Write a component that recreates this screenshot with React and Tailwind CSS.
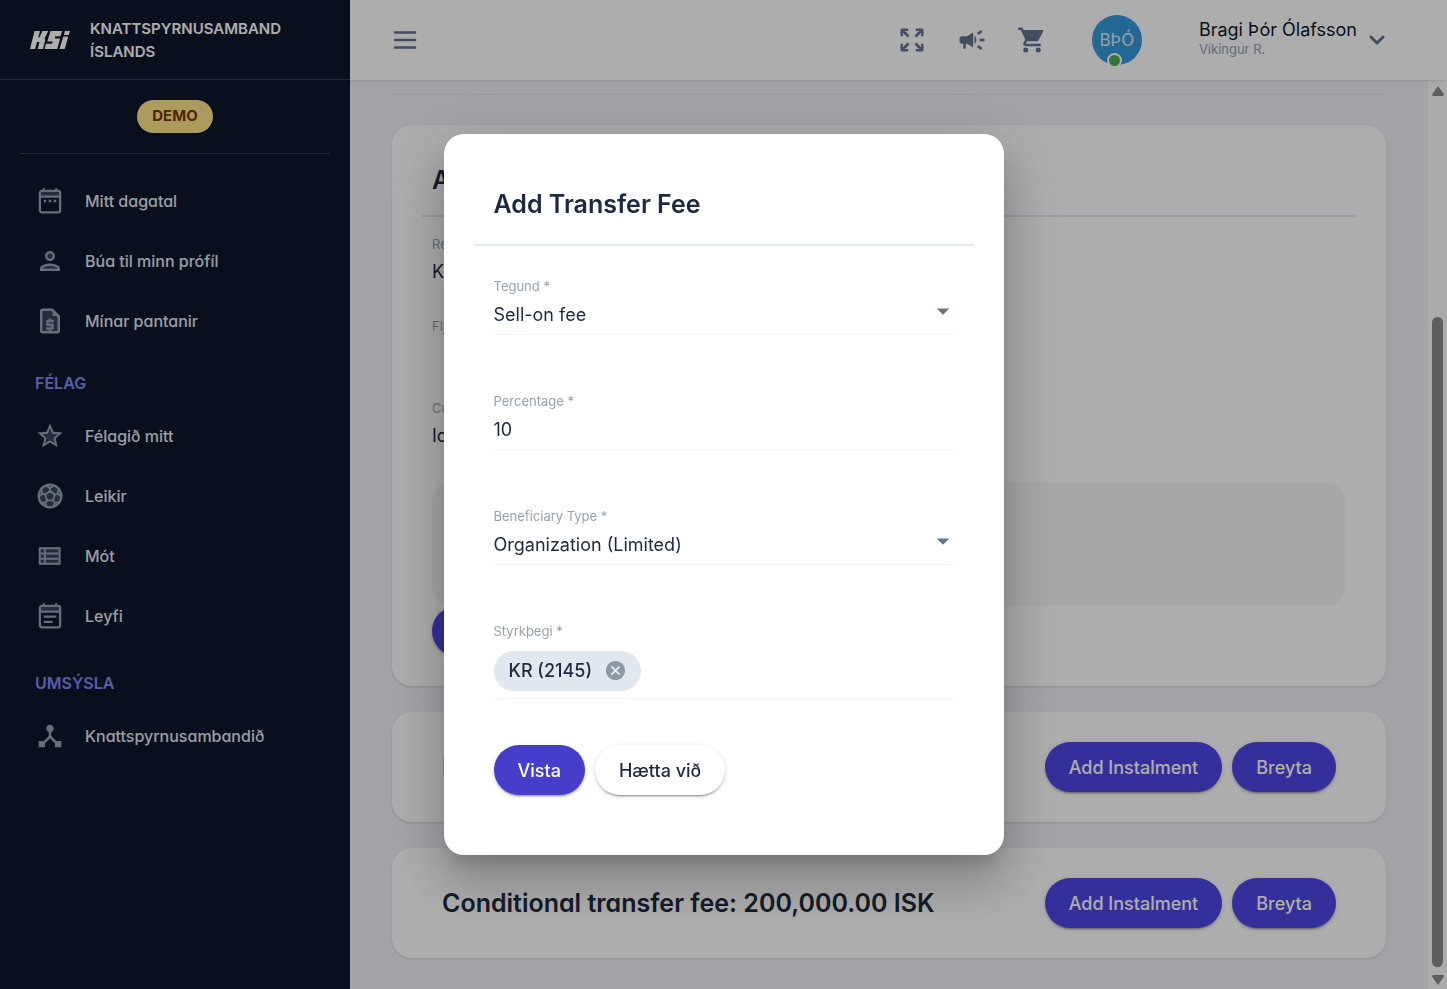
import React from "react";
import { MdCampaign, MdArrowDropDown, MdCancel, MdOutlineDeviceHub, MdAdd } from "react-icons/md";
import { HiOutlineMenu, HiChevronDown } from "react-icons/hi";

const alt = "[font-feature-settings:'cv11']";

function Svg({ children }) {
  return (
    <svg viewBox="0 0 24 24" className="size-[30px]" fill="currentColor" aria-hidden="true">
      {children}
    </svg>
  );
}

function Calendar({ children }) {
  return (
    <Svg>
      <path fillOpacity="0.3" d="M4 4.500h16V8H4z" />
      <g fill="none" stroke="currentColor" strokeWidth="1.8">
        <rect x="3.900" y="3.900" width="16.200" height="17.200" rx="1.500" />
        <path d="M3.900 8.400h16.200M7 1.800v2.400M17 1.800v2.400" />
      </g>
      {children}
    </Svg>
  );
}

const CalendarDots = () => (
  <Calendar>
    <path d="M7 11h2v2H7zM11 11h2v2h-2zM15 11h2v2h-2z" />
  </Calendar>
);
const CalendarNote = () => (
  <Calendar>
    <path d="M7 11.500h10v1.800H7zM7 15.700h7v1.800H7z" />
  </Calendar>
);
const Person = () => (
  <Svg>
    <path fillOpacity="0.3" d="M12 16c-2.700 0-5.800 1.290-6 2.010V18h12c-.2-.710-3.300-2-6-2z" />
    <circle fillOpacity="0.3" cx="12" cy="8" r="2" />
    <path d="M12 12c2.210 0 4-1.790 4-4s-1.790-4-4-4-4 1.790-4 4 1.790 4 4 4zm0-6a2 2 0 110 4 2 2 0 010-4zm0 8c-2.670 0-8 1.340-8 4v2h16v-2c0-2.660-5.330-4-8-4zm-6 4c.2-.710 3.300-2 6-2s5.800 1.290 6 2z" />
  </Svg>
);
const Request = () => (
  <Svg>
    <path fillOpacity="0.3" d="M5 3h9l5 5v13H5z" />
    <path fillRule="evenodd" d="M14 2H6c-1.100 0-2 .9-2 2v16c0 1.100.9 2 2 2h12c1.100 0 2-.9 2-2V8zM6 4h7.200L18 8.800V20H6z" />
    <path d="M14 2v6h6z" />
    <path d="M15 11h-2v-1h-2v1h-1c-.550 0-1 .450-1 1v3c0 .550.450 1 1 1h3v1H9v2h2v1h2v-1h1c.550 0 1-.450 1-1v-3c0-.550-.450-1-1-1h-3v-1h4z" />
  </Svg>
);
const Star = () => (
  <Svg>
    <path fillOpacity="0.3" d="M12 6.100l1.710 4.040 4.380.380-3.320 2.880 1 4.280L12 15.400l-3.760 2.270 1-4.280-3.320-2.880 4.380-.380z" />
    <path d="M22 9.240l-7.190-.620L12 2 9.190 8.630 2 9.240l5.460 4.730L5.820 21 12 17.270 18.180 21l-1.630-7.030zM12 15.400l-3.760 2.270 1-4.280-3.320-2.880 4.380-.380L12 6.100l1.710 4.040 4.380.380-3.320 2.880 1 4.280z" />
  </Svg>
);
const Ball = () => (
  <Svg>
    <circle fillOpacity="0.3" cx="12" cy="12" r="9" />
    <g fill="none" stroke="currentColor" strokeWidth="1.500" strokeLinejoin="round">
      <circle cx="12" cy="12" r="9.100" strokeWidth="1.800" />
      <path d="M12 8l3.900 2.900-1.500 4.600H9.600l-1.500-4.600z" />
      <path d="M12 8V5.700M12 5.700L8.800 3.600M12 5.700l3.200-2.100M15.900 10.900l2.200-.8M18.100 10.100l.9-4M18.100 10.100l2.900 2.600M14.400 15.500l1.500 2M15.900 17.500l4-.5M15.900 17.500l-1.400 3.300M9.600 15.500l-1.500 2M8.100 17.500l-4-.5M8.100 17.500l1.400 3.300M8.100 10.900l-2.200-.8M5.900 10.100L5 6.100M5.900 10.100L3 12.700" />
    </g>
  </Svg>
);
const List = () => (
  <Svg>
    <path fillOpacity="0.3" d="M3 5h17v14H3z" />
    <path fill="none" stroke="currentColor" strokeWidth="1.600" d="M3.800 5.800h15.900v12.400H3.800zM3.800 9.900h15.900M3.800 14.100h15.900M7.900 5.800v12.400" />
  </Svg>
);
const Hub = () => <MdOutlineDeviceHub className="size-[30px]" aria-hidden="true" />;

const groups = [
  {
    items: [
      { label: "Mitt dagatal", Icon: CalendarDots },
      { label: "Búa til minn prófíl", Icon: Person },
      { label: "Mínar pantanir", Icon: Request },
    ],
  },
  {
    title: "FÉLAG",
    items: [
      { label: "Félagið mitt", Icon: Star },
      { label: "Leikir", Icon: Ball },
      { label: "Mót", Icon: List },
      { label: "Leyfi", Icon: CalendarNote },
    ],
  },
  { title: "UMSÝSLA", items: [{ label: "Knattspyrnusambandið", Icon: Hub }] },
];

function Logo() {
  return (
    <svg viewBox="0 0 40 18" className="h-[18px] w-10 shrink-0" fill="currentColor" role="img" aria-label="KSÍ">
      <path d="M4.500 0h5.500L8.300 6.500h1L12.500 0h5.700l-3.600 7.500.6 1.500L13 18H7.700l1.800-7H7L5.200 18H0z" />
      <path d="M20.500 0H32l-1.400 5.200h-5.300l-.6 2.200h5.400L27.200 18H14.500l1.500-5.300h6l.7-2.300h-5.400z" />
      <path d="M35 0h5l-1.200 4h-5zM33.300 5.500h5L34.700 18h-5.200z" />
    </svg>
  );
}

function Sidebar() {
  return (
    <aside className="flex w-[350px] shrink-0 flex-col bg-slate-900 text-slate-200">
      <div className="flex h-20 items-center gap-5 border-b border-slate-700 pl-[30px] text-white">
        <Logo />
        <p className="w-52 text-[15px] leading-[23px] font-semibold">KNATTSPYRNUSAMBAND ÍSLANDS</p>
      </div>
      <div className="mx-5 flex justify-center border-b border-slate-700 py-5">
        <span className="rounded-full bg-[#fde68a] px-[15px] pb-px text-[15px] leading-8 font-bold text-[#78350f]">DEMO</span>
      </div>
      <nav className={`flex flex-col pt-[17px] ${alt}`}>
        {groups.map((g, i) => (
          <section key={i} className={g.title ? "pb-[5px]" : ""}>
            {g.title && <h2 className="px-[35px] pt-[22px] pb-[13px] text-[16px] leading-5 font-semibold text-[#818cf8]">{g.title}</h2>}
            {g.items.map(({ label, Icon }) => (
              <a key={label} href="#" className="flex h-[60px] items-center gap-5 px-[35px] text-[16px] font-medium">
                <span className="text-[#94a3b8]"><Icon /></span>
                {label}
              </a>
            ))}
          </section>
        ))}
      </nav>
    </aside>
  );
}

function Expand() {
  return (
    <svg viewBox="0 0 24 24" className="size-[30px]" fill="none" stroke="currentColor" strokeWidth="2" strokeLinejoin="round" aria-hidden="true">
      <path d="M3.800 9V3.800H9M3.800 3.800l5.400 5.400M20.200 9V3.800H15M20.200 3.800l-5.400 5.400M3.800 15v5.200H9M3.800 20.200l5.400-5.400M20.200 15v5.200H15M20.200 20.200l-5.400-5.400" />
    </svg>
  );
}

function Cart() {
  return (
    <Svg>
      <circle cx="7" cy="20" r="2" />
      <circle cx="17" cy="20" r="2" />
      <path d="M1 2v2h2l3.600 7.590-1.350 2.450C4.520 15.370 5.480 17 7 17h12v-2H7l1.100-2h7.450c.750 0 1.410-.410 1.750-1.030l3.580-6.490A1 1 0 0020 4H5.210l-.940-2z" />
    </Svg>
  );
}

function Header() {
  return (
    <header className="relative z-10 flex h-20 shrink-0 items-center bg-white pr-[55px] pl-10 text-slate-500 shadow">
      <button aria-label="Menu" className="mr-auto"><HiOutlineMenu className="size-[30px]" /></button>
      <div className="flex items-center gap-[30px]">
        <button aria-label="Fullscreen"><Expand /></button>
        <button aria-label="Announcements"><MdCampaign className="size-[30px]" /></button>
        <button aria-label="Cart"><Cart /></button>
      </div>
      <div className="relative ml-[45px] flex size-[50px] items-center justify-center rounded-full bg-[#3498db] pt-0.5 text-[17px] text-slate-200">
        BÞÓ
        <span className="absolute -bottom-[3px] left-[15px] size-[15px] rounded-full border-2 border-white bg-[#4caf50]" />
      </div>
      <button className="ml-[57px] flex items-center gap-[5px] text-left">
        <span className="pb-[3px]">
          <span className="block text-[18px] leading-5 text-slate-900">Bragi Þór Ólafsson</span>
          <span className="block text-[13px] leading-[18px] text-slate-400">Víkingur R.</span>
        </span>
        <HiChevronDown className="size-[30px]" />
      </button>
    </header>
  );
}

const raised = "shadow-[0_3px_1px_-2px_rgba(0,0,0,0.2),0_2px_2px_rgba(0,0,0,0.14),0_1px_5px_rgba(0,0,0,0.12)]";
const pill = `h-[50px] rounded-full px-6 text-[18px] font-medium ${raised}`;
const primary = `${pill} bg-[#4f46e5] text-white`;

function FeeCard({ title }) {
  return (
    <section className="flex items-center gap-2.5 rounded-[20px] bg-white px-[50px] py-[30px] shadow">
      <h2 className={`mr-auto text-[25px] leading-[50px] font-semibold text-slate-800 ${alt}`}>{title}</h2>
      <button className={primary}>Add Instalment</button>
      <button className={primary}>Breyta</button>
    </section>
  );
}

function ReadField({ label, value }) {
  return (
    <div className="h-[82px] px-2.5">
      <dt className="text-[13px] leading-5 text-gray-400">{label}</dt>
      <dd className="pt-1 text-[18px] leading-7 text-slate-800">{value}</dd>
    </div>
  );
}

function Content() {
  return (
    <main className="min-h-0 flex-1 overflow-hidden px-[42px] pt-3.5">
      <div className="border-t border-slate-200" />
      <div className="flex flex-col gap-[26px] pt-[30px]">
        <section className="h-[561px] rounded-[20px] bg-white px-[30px] pt-[30px] shadow">
          <h2 className="border-b-2 border-slate-200 px-2.5 pb-2.5 text-[25px] leading-[50px] font-semibold text-slate-800">Add</h2>
          <dl className="pt-[17px]">
            <ReadField label="Releasing" value="KR" />
            <ReadField label="Fljót" value="" />
            <ReadField label="Currency" value="Icelandic" />
          </dl>
          <div className="mx-2.5 mt-0.5 h-[124px] rounded-[20px] bg-[#f7f7f7]" />
          <button aria-label="Add fee" className={`${primary} ml-2.5`}><MdAdd className="size-6" /></button>
        </section>
        <FeeCard title="Fee" />
        <FeeCard title="Conditional transfer fee: 200,000.00 ISK" />
      </div>
    </main>
  );
}

function Scrollbar() {
  return (
    <div className="flex w-[19px] shrink-0 flex-col items-center bg-[#fcfcfc] pt-1.5 pb-1 text-[#8b8b8b]" aria-hidden="true">
      <svg viewBox="0 0 12 10" className="h-2.5 w-3" fill="currentColor"><path d="M6 0l6 8.500-.8 1.500H.8L0 8.500z" /></svg>
      <div className="h-[221px]" />
      <div className="w-[11px] flex-1 rounded-full bg-[#8b8b8b]" />
      <svg viewBox="0 0 12 10" className="mt-2 h-2.5 w-3" fill="currentColor"><path d="M6 10l6-8.500L11.200 0H.8L0 1.500z" /></svg>
    </div>
  );
}

const labelCls = "block text-[13px] leading-5 text-gray-400";
const control = "h-9 w-full appearance-none bg-transparent text-[18px] text-slate-800 outline-none";

function SelectField({ id, label, value }) {
  return (
    <div className="h-[115px]">
      <label htmlFor={id} className={labelCls}>{label}</label>
      <div className="relative border-b border-slate-100 pb-0.5">
        <select id={id} className={control} defaultValue={value}><option>{value}</option></select>
        <MdArrowDropDown className="pointer-events-none absolute top-0 -right-1 size-[30px] text-slate-500" />
      </div>
    </div>
  );
}

function Dialog() {
  return (
    <div className="fixed inset-0 z-20 flex items-center justify-center bg-black/32">
      <form
        role="dialog"
        aria-labelledby="dialog-title"
        className="w-[560px] rounded-[20px] bg-white px-[30px] pt-[45px] pb-[60px] shadow-[0_14px_19px_-9px_rgba(0,0,0,0.2),0_30px_48px_4px_rgba(0,0,0,0.14),0_11px_58px_10px_rgba(0,0,0,0.12)]"
      >
        <h1 id="dialog-title" className="border-b-2 border-slate-200 px-5 pb-[15px] text-[25px] leading-[50px] font-semibold text-slate-800">Add Transfer Fee</h1>
        <div className="px-5 pt-[30px]">
          <SelectField id="type" label="Tegund *" value="Sell-on fee" />
          <div className="h-[115px]">
            <label htmlFor="percentage" className={labelCls}>Percentage *</label>
            <div className="border-b border-slate-100 pb-0.5">
              <input id="percentage" className={control} defaultValue="10" />
            </div>
          </div>
          <SelectField id="beneficiary-type" label="Beneficiary Type *" value="Organization (Limited)" />
          <div>
            <span className={labelCls}>Styrkþegi *</span>
            <div className="border-b border-slate-100 pt-2.5 pb-[7px]">
              <span className="inline-flex h-10 items-center gap-3 rounded-full bg-slate-200 pr-3.5 pb-px pl-[15px] align-top text-[18px] font-medium text-slate-800">
                KR (2145)
                <button type="button" aria-label="Remove KR (2145)"><MdCancel className="size-[23px] text-[#8d98a6]" /></button>
              </span>
            </div>
          </div>
          <div className="flex gap-2.5 pt-[46px]">
            <button type="submit" className={`${pill} bg-[#463dca] text-white`}>Vista</button>
            <button type="button" className={`${pill} bg-white text-slate-800`}>Hætta við</button>
          </div>
        </div>
      </form>
    </div>
  );
}

export default function App() {
  return (
    <div className="flex h-screen overflow-hidden bg-[#eff2f7] font-['Inter',sans-serif]">
      <Sidebar />
      <div className="flex min-w-0 flex-1 flex-col">
        <Header />
        <div className="flex min-h-0 flex-1">
          <Content />
          <Scrollbar />
        </div>
      </div>
      <Dialog />
    </div>
  );
}
